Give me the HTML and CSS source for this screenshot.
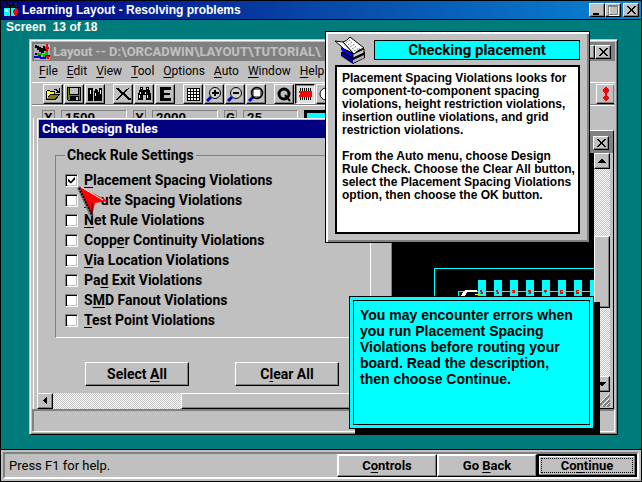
FILE: index.html
```html
<!DOCTYPE html>
<html lang="en">
<head>
<meta charset="utf-8">
<title>Learning Layout - Resolving problems</title>
<link rel="stylesheet" href="styles.css">
</head>
<body>
<header class="titlebar">
  <svg class="title-icon" width="16" height="16" viewBox="0 0 16 16"><path d="M2 1h12v5H2z" fill="#102040"/><path d="M3 1h2v1h2v1h2V1h2v2h1v1H9V3H8v2H6V3H4v2H3z" fill="#000"/><path d="M0 5h7l1 1 1-1h5v9H9l-1 1-1-1H0z" fill="#000"/><path d="M1 6h6v8H1zM8 6h4v8H8z" fill="#00ffff"/><path d="M2 7h3v3H2z" fill="#fff"/><path d="M12 6h2v1h1v4h-1v2h-1v1h-1v-1h-1v-2h-1V8h1V7h1z" fill="#f00"/></svg>
  <h1 class="title-text">Learning Layout - Resolving problems</h1>
  <div class="window-buttons">
    <button class="wb" aria-label="Minimize"><svg width="12" height="12" viewBox="0 0 12 12"><path d="M2 9h6v2H2z"/></svg></button>
    <button class="wb" aria-label="Maximize" disabled><svg width="12" height="12" viewBox="0 0 12 12"><path d="M2 2h9v9H2z" fill="none" stroke="#fff"/><path d="M1 1h9v9H1zM1 2h9" fill="none" stroke="#808080" transform="translate(.5 .5)"/></svg></button>
    <button class="wb last" aria-label="Close"><svg width="12" height="12" viewBox="0 0 12 12"><path d="M2 2h2v1h1v1h1v1h1V4h1V3h1V2h2v1h-1v1H9v1H8v2h1v1h1v1h1v1H9V9H8V8H7V7H6v1H5v1H4v1H2V9h1V8h1V7h1V5H4V4H3V3H2z"/></svg></button>
  </div>
</header>

<main class="desktop">
  <p class="screen-no">Screen&nbsp; 13 of 18</p>

  <section class="app">
    <div class="app-title">
      <svg width="16" height="16" viewBox="0 0 16 16"><path d="M0 0h16v16H0z" fill="#b0b0b0"/><path d="M1 1h2v1h2v1h2v1h2V2h2v2h1v3h-2v2H7V8H5V6H3V4H1zM1 9h3v2H1z"/><path d="M12 0h2v3h1v2h-1v3h-2V5h-1V3h1z" fill="#f00"/><path d="M0 12h4v-1h3v2h4v-2h5v2h-4v2H6v-1H0z" fill="#0000e0"/><path d="M3 9h5v1h3V8h3v3h-3v2H9v-2H3z" fill="#00c000"/><path d="M12 12h3v3h-2z" fill="#f00"/></svg>
      <span class="app-name">Layout -- D:\ORCADWIN\LAYOUT\TUTORIAL\</span>
      <button class="wb" aria-label="Maximize Layout"></button>
      <button class="wb last" aria-label="Close Layout"><svg width="12" height="12" viewBox="0 0 12 12"><path d="M2 2h2v1h1v1h1v1h1V4h1V3h1V2h2v1h-1v1H9v1H8v2h1v1h1v1h1v1H9V9H8V8H7V7H6v1H5v1H4v1H2V9h1V8h1V7h1V5H4V4H3V3H2z"/></svg></button>
    </div>
    <nav class="menu">
      <a href="#"><u>F</u>ile</a><a href="#"><u>E</u>dit</a><a href="#"><u>V</u>iew</a><a href="#"><u>T</u>ool</a><a href="#"><u>O</u>ptions</a><a href="#"><u>A</u>uto</a><a href="#"><u>W</u>indow</a><a href="#"><u>H</u>elp</a>
    </nav>
    <div class="toolbar">
      <div class="tool-group">
        <button class="tool" aria-label="Open"><svg width="16" height="16" viewBox="0 0 16 16"><path d="M9 3h3v1h1v1h1V2h1v5h-4V6h1V5h-1V4H9zM1 5h1V4h3v1h5v3h5v1h-1v1h-1v2h-1v1h-1v1H1z"/><path d="M2 5h3v1h4v2H5v1H4v1H3v2H2z" fill="#ffff00"/><path d="M2 6h1v1H2zM4 6h1v1H4zM3 8h1v1H3zM6 7h1v1H6z" fill="#fff"/><path d="M5 9h8v1h-1v1h-1v1h-1v1H2v-1h1v-1h1v-1h1z" fill="#808000"/></svg></button>
        <button class="tool" aria-label="Save"><svg width="16" height="16" viewBox="0 0 16 16"><path d="M1 1h14v14H2v-1H1z"/><path d="M2 2h1v7h10V2h1v12H2z" fill="#808000"/><path d="M4 2h8v6H4z" fill="#c0c0c0"/><path d="M4 10h9v4H4z"/><path d="M10 11h2v3h-2z" fill="#c0c0c0"/></svg></button>
        <button class="tool" aria-label="Library"><svg width="16" height="16" viewBox="0 0 16 16"><path d="M1 2h5v13H1zM7 5h3v10H7zM9 3h1v1h1v2h1v3h1v6h-3V5H8V3zM12 2h3v13h-3z"/><path d="M3 4h1v4H3zM8 7h1v3H8zM13 4h1v4h-1z" fill="#fff"/></svg></button>
      </div>
      <div class="tool-group">
        <button class="tool" aria-label="Delete"><svg width="16" height="16" viewBox="0 0 16 16"><path d="M1 2h3v1h1v1h1v1h1v1h2V5h1V4h1V3h2V2h1v1h-1v1h-1v1h-1v1h-1v2h1v1h1v1h1v1h1v1h2v2h-3v-1h-1v-1h-1v-1h-1v-1H9V9H7v1H6v1H5v1H4v1H3v1H1v-1h1v-1h1v-1h1v-1h1V9h1V7H5V6H4V5H3V4H2V3H1z"/></svg></button>
        <button class="tool" aria-label="Find"><svg width="16" height="16" viewBox="0 0 16 16"><path d="M4 1h3v3h3V1h3v3h1v3h1v7h-5V9H7v5H2V7h1V4h1z"/><path d="M4 6h1v2H4zM3 9h1v3H3zM9 6h1v2H9zM11 9h1v3h-1zM5 2h1v1H5zM11 2h1v1h-1z" fill="#fff"/></svg></button>
        <button class="tool" aria-label="Edit"><svg width="16" height="16" viewBox="0 0 16 16"><path d="M3 1h11v3H7v3h6v2H7v3h7v3H3z"/></svg></button>
      </div>
      <div class="tool-group">
        <button class="tool" aria-label="Spreadsheet"><svg width="16" height="16" viewBox="0 0 16 16"><path d="M2 2h13v13H2z"/><path d="M3 3h2v2H3zM6 3h2v2H6zM9 3h2v2H9zM12 3h2v2h-2zM3 6h2v2H3zM6 6h2v2H6zM9 6h2v2H9zM12 6h2v2h-2zM3 9h2v2H3zM6 9h2v2H6zM9 9h2v2H9zM12 9h2v2h-2zM3 12h2v2H3zM6 12h2v2H6zM9 12h2v2H9zM12 12h2v2h-2z" fill="#fff"/></svg></button>
        <button class="tool" aria-label="Zoom in"><svg class="smooth" width="16" height="16" viewBox="0 0 16 16"><path d="M1 15l4-4" stroke="#0000c0" stroke-width="3"/><circle cx="9" cy="7" r="5.500" fill="#d0d0d0" stroke="#000"/><path d="M6 6h7v2H6zM8 4h2v6H8z"/></svg></button>
        <button class="tool" aria-label="Zoom out"><svg class="smooth" width="16" height="16" viewBox="0 0 16 16"><path d="M1 15l4-4" stroke="#0000c0" stroke-width="3"/><circle cx="9" cy="7" r="5.500" fill="#d0d0d0" stroke="#000"/><path d="M6 6h6v2H6z"/></svg></button>
        <button class="tool" aria-label="Zoom all"><svg class="smooth" width="16" height="16" viewBox="0 0 16 16"><path d="M1 15l4-4" stroke="#0000c0" stroke-width="3"/><circle cx="9" cy="7" r="5.500" fill="#808080" stroke="#000" stroke-width="1.5"/><path d="M6 4h6v6H6z" fill="#fff"/></svg></button>
      </div>
      <div class="tool-group">
        <button class="tool" aria-label="Query"><svg class="smooth" width="16" height="16" viewBox="0 0 16 16"><circle cx="8" cy="8" r="5" fill="none" stroke="#000" stroke-width="3"/><path d="M9 9l5 6" stroke="#000" stroke-width="2"/></svg></button>
        <button class="tool pressed" aria-label="Component"><svg width="16" height="16" viewBox="0 0 16 16"><path d="M3 2h1v12H3zM5 2h1v12H5zM7 2h1v12H7zM9 2h1v12H9zM11 2h1v12h-1zM13 2h1v12h-1z"/><path d="M2 5h13v6H2V9h1V7H2z" fill="#f00"/></svg></button>
        <button class="tool" aria-label="Pin"><svg class="smooth" width="16" height="16" viewBox="0 0 16 16"><circle cx="8" cy="8" r="6" fill="#fff" stroke="#000"/></svg></button>
      </div>
      <button class="tool alert" aria-label="Design rule check"><svg width="16" height="16" viewBox="0 0 16 16"><path d="M7 1h2v1h1v1h1v3h-1v1H9v3h1v1h1v2h-1v1H9v1H7v-1H6v-1H5v-2h1v-1h1V7H6V6H5V3h1V2h1z" fill="#f00"/></svg></button>
    </div>
    <div class="coords">
      <span class="axis">X</span><span class="value">1500</span>
      <span class="axis">Y</span><span class="value">2000</span>
      <span class="axis">G</span><span class="value narrow">25</span>
      <span class="swatch"></span>
    </div>

    <div class="workspace">
      <form class="rules">
        <h2 class="rules-title">Check Design Rules</h2>
        <div class="rules-body">
          <fieldset class="settings">
            <legend>Check Rule Settings</legend>
            <label><input type="checkbox" checked><span><u>P</u>lacement Spacing Violations</span></label>
            <label><input type="checkbox"><span><u>R</u>oute Spacing Violations</span></label>
            <label><input type="checkbox"><span><u>N</u>et Rule Violations</span></label>
            <label><input type="checkbox"><span>Copp<u>e</u>r Continuity Violations</span></label>
            <label><input type="checkbox"><span><u>V</u>ia Location Violations</span></label>
            <label><input type="checkbox"><span>Pa<u>d</u> Exit Violations</span></label>
            <label><input type="checkbox"><span>S<u>M</u>D Fanout Violations</span></label>
            <label><input type="checkbox"><span><u>T</u>est Point Violations</span></label>
          </fieldset>
          <div class="rule-actions">
            <button type="button" class="push">Select <u>A</u>ll</button>
            <button type="button" class="push">C<u>l</u>ear All</button>
          </div>
        </div>
        <div class="hscroll">
          <button type="button" class="arrow" aria-label="Scroll left"><svg width="8" height="8" viewBox="0 0 8 8"><path d="M5 0h1v7H5V6H4V5H3V4H2V3h1V2h1V1h1z"/></svg></button>
          <div class="thumb"></div>
        </div>
        <svg class="cursor" width="32" height="32" viewBox="0 0 32 32"><path d="M7 9h17v11H12z" fill="#c0c0c0"/><path d="M0 2l3-2 13 29-3 2z" fill="#808080"/><path d="M2 0l29 15-13 2-3 13z" fill="#f00"/><path d="M4 1l22 13" stroke="#fff"/><path d="M2 2l13 27" stroke="#000" stroke-width="2" stroke-dasharray="2 1"/><path d="M15 29V17" stroke="#000"/></svg>
      </form>

      <section class="design">
        <div class="design-title"><button class="wb last" aria-label="Close design"><svg width="12" height="12" viewBox="0 0 12 12"><path d="M2 2h2v1h1v1h1v1h1V4h1V3h1V2h2v1h-1v1H9v1H8v2h1v1h1v1h1v1H9V9H8V8H7V7H6v1H5v1H4v1H2V9h1V8h1V7h1V5H4V4H3V3H2z"/></svg></button></div>
        <div class="design-main">
          <div class="canvas">
            <svg width="160" height="42" viewBox="0 0 160 42">
              <path d="M0 0h160v1H1v41H0zM24 23h136v1H25v18h-1z" fill="#0ff"/>
              <path d="M44 12h8v30h-8zM60 12h8v30h-8zM76 12h8v30h-8zM92 12h8v30h-8zM108 12h8v30h-8zM124 12h8v30h-8zM140 12h8v30h-8zM156 12h4v30h-4z" fill="#0ff"/>
              <path d="M31 22h12v2H33l-2 4h-4l3-5z" fill="#fff"/><path d="M41 26h4v1h-4z" fill="#ff0"/>
              <path d="M46 22h2v2h1v2h-3v-1h1v-1h-1zM62 22h2v2h1v2h-3v-1h1v-1h-1zM78 22h3v3h-3v-1h1v-1h-1zM94 22h3v4h-3v-1h1v-1h-1zM110 22h3v2h-1v2h-1v-2h-1zM126 22h3v1h-2v1h2v2h-3zM142 22h3v1h-2v1h2v2h-3z" fill="#f00"/>
            </svg>
          </div>
          <div class="vscroll">
            <button class="arrow" aria-label="Scroll up"><svg width="8" height="8" viewBox="0 0 8 8"><path d="M3 2h2v1h1v1h1v1h1v1H0V5h1V4h1V3h1z"/></svg></button>
            <div class="thumb"></div>
            <button class="arrow" aria-label="Scroll down"><svg width="8" height="8" viewBox="0 0 8 8"><path d="M0 2h8v1H7v1H6v1H5v1H3V5H2V4H1V3H0z"/></svg></button>
          </div>
        </div>
        <div class="grip"><svg width="14" height="14" viewBox="0 0 14 14"><path d="M1 13L13 1M6 13l7-7M10 13l3-3" stroke="#fff"/><path d="M2 14L14 2M7 14l7-7M11 14l3-3" stroke="#808080" stroke-width="2"/></svg></div>
      </section>
    </div>
    <div class="app-status"></div>
  </section>

  <aside class="topic">
    <div class="topic-head">
      <svg width="32" height="28" viewBox="0 0 32 28"><path d="M6 16l12-4 12 4v6l-12 6-12-8z" fill="#000"/><path d="M7 17l11 7v3L7 19z" fill="#0000d0"/><path d="M18 24l11-5v3l-11 5z" fill="#b0b0b0"/><path d="M6 11l12 8v3L6 14z" fill="#0000ff"/><path d="M18 18l11-5v4l-11 5z" fill="#c8c8c8" stroke="#000"/><path d="M0 5l8 1 10 11-9-4-2-2z" fill="#fff" stroke="#000"/><path d="M8 6q4-1 7-5l14 11q-5 1-10 6z" fill="#fff" stroke="#000"/><path d="M11 7l4-3M13 9l4-3M15 11l5-3M17 13l5-3M19 15l6-3" stroke="#808080" stroke-dasharray="2 1"/></svg>
      <h2>Checking placement</h2>
    </div>
    <div class="topic-text">
      <p>Placement Spacing Violations looks for<br>component-to-component spacing<br>violations, height restriction violations,<br>insertion outline violations, and grid<br>restriction violations.</p>
      <p>From the Auto menu, choose Design<br>Rule Check. Choose the Clear All button,<br>select the Placement Spacing Violations<br>option, then choose the OK button.</p>
    </div>
  </aside>

  <aside class="note">
    <p>You may encounter errors when<br>you run Placement Spacing<br>Violations before routing your<br>board. Read the description,<br>then choose Continue.</p>
  </aside>
</main>

<footer class="statusbar">
  <div class="status-inner">
    <span class="hint">Press F1 for help.</span>
    <button class="nav">C<u>o</u>ntrols</button>
    <button class="nav">Go <u>B</u>ack</button>
    <button class="nav default"><span>Co<u>n</u>tinue</span></button>
  </div>
</footer>
</body>
</html>
```
FILE: styles.css
```css
* { box-sizing: border-box; }

body {
  margin: 0;
  height: 100vh;
  display: flex;
  flex-direction: column;
  overflow: hidden;
  border: 1px solid #000;
  background: #007b7b;
  color: #000;
  font: bold 12px/16px Roboto, "Liberation Sans", sans-serif;
  white-space: nowrap;
}

h1, h2, p { margin: 0; font-size: inherit; font-weight: bold; }
svg { display: block; flex: none; shape-rendering: crispEdges; }
svg.smooth { shape-rendering: auto; }
button { margin: 0; padding: 0; color: #000; font: inherit; background: #c0c0c0; border-radius: 0; }
u { text-underline-offset: 2px; text-decoration-skip-ink: none; }

/* Main title bar */
.titlebar {
  display: flex;
  align-items: center;
  height: 19px;
  padding: 0 2px;
  border-bottom: 1px solid #000;
  background: linear-gradient(90deg, #000080, #0848a8 50%, #0884d0);
  color: #fff;
}
.title-text, .screen-no, .topic-text, .note { font-family: "Liberation Sans", sans-serif; }
.title-text { flex: 1; padding-left: 3px; }
.window-buttons { display: flex; }
.wb {
  display: flex;
  align-items: center;
  justify-content: center;
  flex: none;
  width: 16px;
  height: 14px;
  border: 1px solid;
  border-color: #fff #000 #000 #fff;
  box-shadow: inset -1px -1px #808080;
}
.window-buttons .last { margin-left: 2px; }

/* Desktop */
.desktop { position: relative; flex: 1; min-height: 0; }
.screen-no { padding-left: 5px; line-height: 14px; color: #fff; }

/* Layout application window */
.app {
  position: absolute;
  inset: 19px 23px 14px 28px;
  display: flex;
  flex-direction: column;
  padding: 2px;
  border: 1px solid;
  border-color: #c0c0c0 #000 #000 #c0c0c0;
  box-shadow: inset 1px 1px #fff, inset -1px -1px #808080;
  background: #c0c0c0;
}
.app-title {
  display: flex;
  align-items: center;
  height: 19px;
  padding: 0 4px 0 2px;
  background: #808080;
  color: #c0c0c0;
  font-size: 13px;
}
.app-name { flex: 1; padding-left: 3px; }
.menu {
  display: flex;
  gap: 9px;
  height: 21px;
  padding-left: 7px;
  font-size: 12px;
  font-weight: normal;
  line-height: 20px;
}
.menu a { color: #000; text-decoration: none; }
.toolbar {
  display: flex;
  gap: 8px;
  height: 23px;
  padding: 1px 1px 0 11px;
  border-top: 1px solid #fff;
  border-bottom: 1px solid #808080;
}
.tool-group { display: flex; gap: 1px; }
.tool {
  display: flex;
  align-items: center;
  justify-content: center;
  width: 20px;
  height: 20px;
  border: 1px solid;
  border-color: #fff #000 #000 #fff;
  box-shadow: inset -1px -1px #808080;
}
.tool.pressed { border-color: #000 #fff #fff #000; background: #e0e0e0; box-shadow: inset 1px 1px #808080; }
.tool.alert { margin-left: auto; border-right: 0; width: 18px; }
.coords {
  display: flex;
  gap: 6px;
  height: 13px;
  padding: 4px 0 0 10px;
  overflow: hidden;
  border-top: 1px solid #fff;
  font-size: 13px;
  line-height: 14px;
}
.axis, .value { height: 16px; border: 1px solid #808080; }
.axis { width: 13px; text-align: center; }
.value { width: 66px; padding-left: 3px; border-right-color: #fff; }
.value.narrow { width: 55px; }
.swatch { width: 40px; height: 16px; border: 3px solid #000; background: #0ff; }

/* Workspace */
.workspace {
  display: flex;
  flex: 1;
  min-height: 0;
  padding: 0 1px 0 5px;
}
.rules {
  position: relative;
  display: flex;
  flex-direction: column;
  flex: 0 0 354px;
  border-top: 1px solid #fff;
  border-left: 1px solid #fff;
  box-shadow: -3px 0 #c0c0c0, -4px 0 #fff;
  font-size: 14px;
}
.rules-title {
  margin: 1px 0 0 1px;
  padding-left: 3px;
  background: #000080;
  color: #fff;
  font-size: 13px;
  line-height: 18px;
}
.rules-body { flex: 1; padding: 8px 20px 0 17px; }
.settings {
  display: flex;
  flex-direction: column;
  margin: 0;
  padding: 6px 9px 7px;
  border: 1px solid #808080;
  border-right-color: #fff;
  border-bottom-color: #fff;
}
.settings legend { padding: 0 2px; line-height: 18px; }
.settings label { display: flex; align-items: center; gap: 6px; height: 20px; }
.settings input {
  appearance: none;
  width: 13px;
  height: 13px;
  margin: 0;
  border: 1px solid;
  border-color: #808080 #fff #fff #808080;
  box-shadow: inset 1px 1px #000, inset -1px -1px #c0c0c0;
  background: #fff;
}
.settings input:checked::before {
  content: "";
  display: block;
  width: 7px;
  height: 7px;
  margin: 2px;
  background: #000;
  clip-path: polygon(0 29%, 43% 70%, 100% 0, 100% 43%, 43% 100%, 0 72%);
}
.rule-actions { display: flex; gap: 46px; padding: 24px 0 0 30px; }
.push {
  width: 104px;
  height: 24px;
  border: 1px solid;
  border-color: #fff #000 #000 #fff;
  box-shadow: inset -1px -1px #808080;
}
.hscroll, .vscroll { background: repeating-conic-gradient(#fff 0 25%, #c0c0c0 0 50%) 0 0 / 2px 2px; }
.hscroll { display: flex; height: 16px; margin-left: -1px; }
.arrow {
  display: flex;
  align-items: center;
  justify-content: center;
  flex: none;
  width: 16px;
  height: 16px;
  border: 1px solid;
  border-color: #fff #000 #000 #fff;
  box-shadow: inset -1px -1px #808080;
}
.thumb {
  border: 1px solid;
  border-color: #fff #000 #000 #fff;
  box-shadow: inset -1px -1px #808080;
  background: #c0c0c0;
}
.hscroll .thumb { flex: 1; margin-left: 128px; }
.cursor { position: absolute; left: 39px; top: 67px; shape-rendering: auto; }

.design {
  display: flex;
  flex-direction: column;
  flex: 1;
  min-width: 0;
  margin-top: 12px;
  border: 1px solid;
  border-color: #fff #000 #000 #808080;
}
.design-title { display: flex; justify-content: flex-end; align-items: center; height: 22px; padding: 2px 4px 0 0; background: #808080; }
.design-main { display: flex; flex: 1; min-height: 0; margin-right: 3px; }
.canvas { display: flex; flex: 1; justify-content: flex-end; min-width: 0; padding-top: 115px; overflow: hidden; background: #000; }
.vscroll { display: flex; flex-direction: column; width: 16px; }
.vscroll .thumb { height: 72px; margin-top: 67px; }
.vscroll .arrow:last-child { margin-top: auto; }
.grip { display: flex; justify-content: flex-end; padding: 1px 3px 1px 0; }
.app-status {
  height: 23px;
  border: 1px solid;
  border-color: #808080 #fff #fff #808080;
  box-shadow: inset 1px 1px #808080;
}

/* Topic window */
.topic {
  position: absolute;
  left: 324px;
  top: 11px;
  width: 265px;
  padding: 4px 9px 8px 9px;
  border: 1px solid #000;
  box-shadow: inset 2px 2px #fff, inset -2px -2px #808080;
  background: #c0c0c0;
}
.topic-head { display: flex; justify-content: space-between; gap: 7px; align-items: center; padding-bottom: 1px; }
.topic-head svg { shape-rendering: auto; }
.topic-head h2 {
  flex: 1;
  height: 20px;
  border: 1px solid #000;
  background: #0ff;
  font-size: 15px;
  line-height: 18px;
  text-align: center;
}
.topic-text { height: 169px; padding: 5px; border: 2px solid #000; background: #fff; line-height: 13px; }
.topic-text p + p { margin-top: 13px; }

/* Instruction note */
.note {
  position: absolute;
  left: 348px;
  top: 276px;
  width: 245px;
  height: 133px;
  padding: 3px;
  border: 1px solid #000;
  box-shadow: 6px 6px #000;
  background: #0ff;
  font-size: 14px;
}
.note p { height: 100%; padding: 6px; border: 1px solid #000; }

/* Status bar */
.statusbar { padding: 2px 2px 2px 2px; border-top: 1px solid #000; background: #c0c0c0; }
.status-inner {
  display: flex;
  align-items: stretch;
  height: 27px;
  border: 2px solid;
  border-color: #808080 #fff #fff #808080;
}
.hint { flex: 1; padding-left: 4px; font-size: 13px; font-weight: normal; line-height: 23px; }
.nav {
  width: 100px;
  border: 1px solid;
  border-color: #fff #000 #000 #fff;
  box-shadow: inset -1px -1px #808080, inset 1px 1px #fff;
  font-size: 13px;
}
.default { padding: 2px; border: 2px solid #000; box-shadow: inset -1px -1px #808080, inset 1px 1px #fff; }
.default span { display: block; border: 1px dotted #000; line-height: 13px; }
```
